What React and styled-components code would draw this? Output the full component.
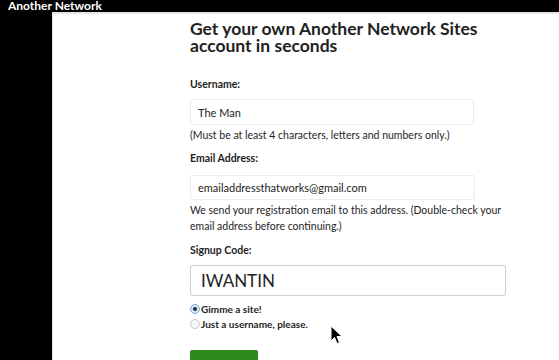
import styled, { createGlobalStyle } from "styled-components";

const GlobalStyle = createGlobalStyle`
  html, body {
    margin: 0;
    padding: 0;
    background: #000;
    height: 360px;
    overflow: hidden;
  }
  body {
    font-family: Lato, "Open Sans", "Liberation Sans", sans-serif;
  }
`;

const Page = styled.div`
  width: 559px;
  height: 360px;
  background: #000;
  display: flex;
  flex-direction: column;
  position: relative;
  overflow: hidden;
`;

const TopBar = styled.div`
  height: 18px;
  padding-left: 8px;
  display: flex;
  align-items: flex-start;
`;

const Brand = styled.div`
  color: #fff;
  font-weight: 700;
  font-size: 12px;
  line-height: 12px;
  margin-top: 0;
`;

const Body = styled.div`
  flex: 1;
  display: flex;
`;

const Gutter = styled.div`
  width: 52px;
  flex-shrink: 0;
`;

const Panel = styled.div`
  flex: 1;
  background: #fff;
  border-top: 2px solid #e6e6e6;
  border-left: 1px solid #e6e6e6;
  padding: 6px 0 0 137px;
  color: #1e1e1e;
`;

const Title = styled.h1`
  margin: 0 0 23px;
  font-size: 17.5px;
  line-height: 17px;
  font-weight: 700;
  color: #222;
  width: 320px;
`;

const Label = styled.div`
  font-size: 10.5px;
  font-weight: 700;
  line-height: 14px;
  margin-bottom: ${(p) => p.gap || 10}px;
`;

const Field = styled.div`
  width: ${(p) => p.w}px;
  height: ${(p) => p.h}px;
  box-sizing: border-box;
  border: 1px solid ${(p) => (p.strong ? "#cfcfcf" : "#ececec")};
  border-radius: 2px;
  display: flex;
  align-items: center;
  padding-left: ${(p) => (p.big ? 10 : 7)}px;
  font-size: ${(p) => (p.big ? 17 : 11)}px;
  color: #222;
`;

const Hint = styled.div`
  font-size: 10.5px;
  line-height: 16px;
  margin: 2px 0 ${(p) => p.after || 8}px;
  width: 320px;
`;

const Radios = styled.div`
  margin-top: 7px;
  display: flex;
  flex-direction: column;
  gap: 3px;
`;

const RadioRow = styled.div`
  display: flex;
  align-items: center;
  gap: 1px;
  font-size: 10px;
  font-weight: 700;
  line-height: 12px;
`;

const RadioDot = styled.span`
  width: 10px;
  height: 10px;
  box-sizing: border-box;
  border-radius: 50%;
  border: 1px solid ${(p) => (p.on ? "#7fa6d6" : "#c8c8c8")};
  background: ${(p) => (p.on ? "#dbe8f7" : "#f6f6f6")};
  display: flex;
  align-items: center;
  justify-content: center;
  &::after {
    content: "";
    width: 4px;
    height: 4px;
    border-radius: 50%;
    background: #1d2b44;
    display: ${(p) => (p.on ? "block" : "none")};
  }
`;

const SubmitButton = styled.div`
  margin-top: 20px;
  width: 68px;
  height: 30px;
  background: #2d8a1c;
  border-radius: 2px;
`;

const Cursor = styled.svg`
  position: absolute;
  left: 330px;
  top: 325px;
`;

export default function App() {
  return (
    <Page>
      <GlobalStyle />
      <TopBar>
        <Brand>Another Network</Brand>
      </TopBar>
      <Body>
        <Gutter />
        <Panel>
          <Title>Get your own Another Network Sites account in seconds</Title>
          <Label gap={8}>Username:</Label>
          <Field w={284} h={26}>The Man</Field>
          <Hint>(Must be at least 4 characters, letters and numbers only.)</Hint>
          <Label gap={10}>Email Address:</Label>
          <Field w={285} h={25}>emailaddressthatworks@gmail.com</Field>
          <Hint after={9}>We send your registration email to this address. (Double-check your email address before continuing.)</Hint>
          <Label gap={8}>Signup Code:</Label>
          <Field w={316} h={31} big strong>IWANTIN</Field>
          <Radios>
            <RadioRow><RadioDot on />Gimme a site!</RadioRow>
            <RadioRow><RadioDot />Just a username, please.</RadioRow>
          </Radios>
          <SubmitButton />
        </Panel>
      </Body>
      <Cursor width="14" height="20" viewBox="0 0 14 20">
        <path d="M1 1 L1 16 L4.5 12.5 L7 18.5 L9.5 17.5 L7 11.5 L12 11.5 Z" fill="#000" stroke="#fff" strokeWidth="1" />
      </Cursor>
    </Page>
  );
}
